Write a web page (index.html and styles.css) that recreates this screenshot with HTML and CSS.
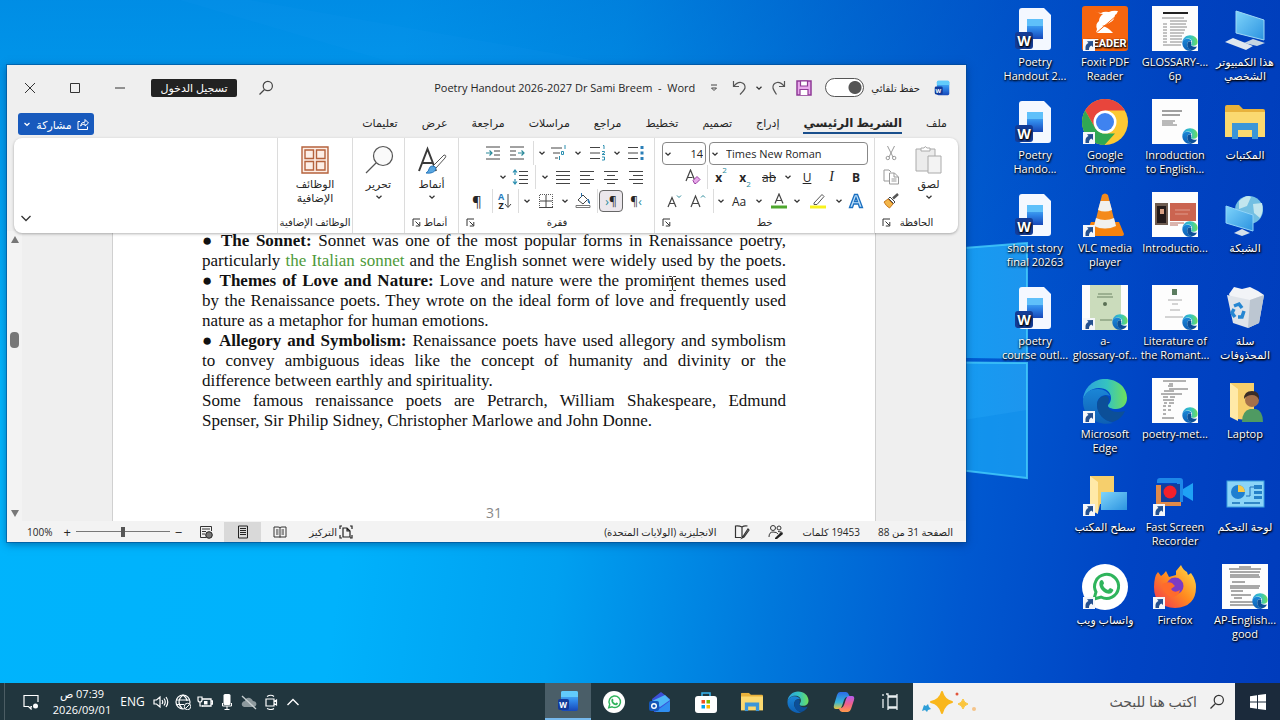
FILE: index.html
```
<!DOCTYPE html>
<html lang="ar" dir="rtl">
<head>
<meta charset="utf-8">
<title>Poetry Handout 2026-2027 Dr Sami Breem - Word</title>
<link rel="stylesheet" href="styles.css">
</head>
<body>
<svg class="defs" aria-hidden="true">
  <defs>
    <linearGradient id="gEdgeA" x1="0" y1="0" x2="1" y2="0"><stop offset="0" stop-color="#2b9fe0"/><stop offset=".55" stop-color="#35c3c0"/><stop offset="1" stop-color="#6fe05a"/></linearGradient>
    <linearGradient id="gEdgeB" x1="0" y1="0" x2="0" y2="1"><stop offset="0" stop-color="#1b86d6"/><stop offset="1" stop-color="#0d5fb4"/></linearGradient>
    <linearGradient id="gWord" x1="0" y1="0" x2="0" y2="1"><stop offset="0" stop-color="#5cc8fa"/><stop offset=".5" stop-color="#2f86e8"/><stop offset="1" stop-color="#1747b8"/></linearGradient>
    <linearGradient id="gFox" x1="1" y1="0" x2="0" y2="1"><stop offset="0" stop-color="#ffe14a"/><stop offset=".5" stop-color="#ff8a1f"/><stop offset="1" stop-color="#f02a5a"/></linearGradient>
    <linearGradient id="gScreen" x1="0" y1="0" x2="1" y2="1"><stop offset="0" stop-color="#7fd4fb"/><stop offset="1" stop-color="#2b93e0"/></linearGradient>
    <linearGradient id="gPane" x1="0" y1="0" x2="1" y2="0"><stop offset="0" stop-color="#0fa2f6"/><stop offset="1" stop-color="#1d95ee"/></linearGradient>
    <linearGradient id="gCopA" x1="0" y1="0" x2="0" y2="1"><stop offset="0" stop-color="#2a6be8"/><stop offset=".6" stop-color="#36b6d8"/><stop offset="1" stop-color="#e8c63a"/></linearGradient>
    <linearGradient id="gCopB" x1="0" y1="0" x2="0" y2="1"><stop offset="0" stop-color="#b45cf0"/><stop offset=".5" stop-color="#f0608c"/><stop offset="1" stop-color="#ff9a4a"/></linearGradient>
  </defs>
  <symbol id="chev" viewBox="0 0 8 8"><path d="M1.500 2.800 4 5.200 6.500 2.800" fill="none" stroke="#333" stroke-width="1.300"/></symbol>
  <symbol id="launch" viewBox="0 0 9 9"><path d="M1 8V1h7M3.500 3.500 7.500 7.500M7.800 4v4h-4" fill="none" stroke="#333" stroke-width="1"/></symbol>
  <symbol id="arrow" viewBox="0 0 12 12"><path d="M0 0h12v12H0z" fill="#f4f6fa"/><path d="M2.500 11V8.500q0-3.500 3-4.500L4 2.200 10 2v6L8.300 6.500Q5.800 7.500 6 11z" fill="#24508f"/></symbol>
  <symbol id="edge" viewBox="0 0 46 46">
    <path d="M1 22C2 9 12 1 23 1c13 0 22 9 22 19 0 7-5 11-11 11-5 0-8-2-8-3 0-2 3-3 3-8 0-6-5-10-12-10C9 10 3 15 1 22z" fill="url(#gEdgeA)"/>
    <path d="M1 22C3 14 9 11 16 11c6 0 10 3 12 7-6-3-13 1-13 9 0 9 8 16 16 18-17 4-31-8-30-23z" fill="url(#gEdgeB)"/>
    <path d="M15 27c0-5 4-10 10-9 3 2 2 5 1 8-1 5 4 8 10 8 4 0 6-1 7-1-2 5-7 10-13 11-8-1-15-8-15-17z" fill="#0c4f98"/>
  </symbol>
  <symbol id="folder" viewBox="0 0 40 34"><path d="M0 2q0-2 2-2h12l4 4h20q2 0 2 2v26H0z" fill="#e8b23c"/><path d="M0 7h40v25H0z" fill="#fbd970"/><path d="M7 34V18h26v16h-6v-9H13v9z" fill="#3c96d8"/></symbol>
  <symbol id="worddoc" viewBox="0 0 46 46">
    <path d="M10 2h22l7 7v32q0 3-3 3H10q-3 0-3-3V5q0-3 3-3z" fill="#f4f8ff"/><path d="M15 13h16v20H15z" fill="url(#gWord)"/><path d="M15 13h16v7H15z" fill="#5fc0fa"/>
    <rect x="3" y="26" width="18" height="17" rx="3" fill="#143c96"/><text x="12" y="40" text-anchor="middle" class="badge-letter">W</text>
  </symbol>
  <symbol id="wordapp" viewBox="0 0 22 22"><rect x="4" y="1" width="17" height="20" rx="2" fill="url(#gWord)"/><path d="M4 3q0-2 2-2h13q2 0 2 2v4H4z" fill="#62cbfb"/><rect x="1" y="9" width="11" height="11" rx="2" fill="#123a9a"/><text x="6" y="18" text-anchor="middle" class="app-letter">W</text></symbol>
  <symbol id="whats" viewBox="0 0 46 46"><circle cx="23" cy="23" r="23" fill="#fff"/><path d="M12 35l2-7a12 12 0 1 1 5 5z" fill="none" stroke="#2fb45c" stroke-width="3"/><path d="M18 17c2-2 3-1 4 2 0 1-1 2-1 2 1 3 3 4 5 5l2-2c3 1 4 2 3 3-2 4-6 3-9 1-3-2-6-7-4-11z" fill="#2fb45c"/></symbol>
  <symbol id="lens" viewBox="0 0 16 16"><circle cx="9.800" cy="6" r="4.600" fill="none" stroke="currentColor" stroke-width="1.200"/><path d="M6.500 9.500 1.500 14.500" stroke="currentColor" stroke-width="1.200"/></symbol>
</svg>

<main class="desktop">
  <svg class="wallpaper" viewBox="0 0 1280 683" preserveAspectRatio="none" aria-hidden="true">
    <path d="M180 0 400 65H620L250 0z" fill="#3bb0ff" opacity=".06"/>
    <path d="M900 253 1027 243V359L900 357z" fill="url(#gPane)"/>
    <path d="M900 362 1027 363V478L900 463z" fill="url(#gPane)"/>
    <path d="M900 430 1027 410V478L900 463z" fill="#0b8bea" opacity=".5"/>
    <path d="M900 253 1027 243V359M900 362 1027 363V478L900 463" fill="none" stroke="#45cdfb" stroke-width="2" opacity=".8"/>
  </svg>

  <nav class="shortcuts" aria-label="سطح المكتب">
    <a href="#"><svg viewBox="0 0 46 46"><path d="M14 5 42 14V34L14 27z" fill="url(#gScreen)" stroke="#9fd8f5"/><path d="M22 37l9-4 12 4-8 3z" fill="#c5d5e2"/><path d="M3 36l8-4 20 8-7 4z" fill="#dfe7ee"/></svg><span>هذا الكمبيوتر<br>الشخصي</span></a>
    <a href="#"><svg viewBox="0 0 46 46"><use href="#folder" x="3" y="6" width="40" height="34"/></svg><span>المكتبات</span></a>
    <a href="#"><svg viewBox="0 0 46 46"><circle cx="27" cy="18" r="14" fill="#72bfe2"/><path d="M17 9q8-7 12-4l-4 9-8 3zM31 12l9-1q2 8-2 15l-6-5z" fill="#c2e6ee"/><path d="M4 14 31 23V39L4 31z" fill="url(#gScreen)" stroke="#8fd3f8"/><path d="M12 41l8-4 8 4-8 3z" fill="#d5e0ea"/></svg><span>الشبكة</span></a>
    <a href="#"><svg viewBox="0 0 46 46"><path d="M7 9 12 2l8 2 8-2 8 4 6 4-4 6H9z" fill="#f2f4f7"/><path d="M5 10l23 5 14-5-5 28-11 5-15-5z" fill="#dfe4ea"/><path d="M28 15 42 10 37 38l-11 5z" fill="#bcc6d1"/><path d="M12 21l5-2 3 4M22 26l-2 6h-4M13 32l-3-4 2-4" fill="none" stroke="#2586d2" stroke-width="3.500"/></svg><span>سلة<br>المحذوفات</span></a>
    <a href="#"><svg viewBox="0 0 46 46"><path d="M8 5h24v38l-16-2-8-3z" fill="#f6cf6c"/><path d="M8 5l8 6v32l-8-4z" fill="#ffe9a8"/><path d="M20 44q0-11 8-13h6q7 2 7 13z" fill="#4f9a62"/><circle cx="30" cy="22" r="7" fill="#a5704a"/><path d="M22 21q0-8 8-8t7 9q-2-5-7-5t-8 4z" fill="#3a2c26"/></svg><span>Laptop</span></a>
    <a href="#"><svg viewBox="0 0 46 46"><rect x="5" y="10" width="37" height="26" fill="#8bd4f7" stroke="#3a9fe0"/><circle cx="16" cy="21" r="7" fill="#1f7fd0"/><path d="M16 21V14a7 7 0 0 1 7 7z" fill="#f7c948"/><path d="M24 25h4V16h5" fill="none" stroke="#2173bd"/><path d="M32 14h8v4h-8zM32 20h8v3h-8zM32 25h8v3h-8z" fill="#2480c8"/><path d="M10 32h8M22 32h16" stroke="#3287c7" stroke-width="2"/></svg><span>لوحة التحكم</span></a>
    <a href="#"><svg viewBox="0 0 46 46"><path d="M0 0h46v45H0z" fill="#fdfdfd"/><path d="M17 3h12M7 5h32M8 8h30M8 11h29M8 13h30M10 18h13M8 22h30M8 24h29M9 27h12M9 31h20M12 34h8M8 38h26M8 41h24" stroke="#555" stroke-width="1"/><use href="#edge" x="30" y="29" width="16" height="16"/></svg><span>AP-English...<br>good</span></a>

    <a href="#"><svg viewBox="0 0 46 46"><path d="M0 0h46v45H0z" fill="#fdfdfd"/><path d="M11 7h25" stroke="#222" stroke-width="2"/><path d="M10 12h22M18 15h17M11 18h4M18 18h16M11 21h4M18 21h17M11 24h4M18 24h15M11 27h4M18 27h14M11 30h4M18 30h12M11 33h4M18 33h12M11 36h4M18 36h12M11 39h18" stroke="#888" stroke-width="1"/><use href="#edge" x="30" y="29" width="16" height="16"/></svg><span>GLOSSARY-...<br>6p</span></a>
    <a href="#"><svg viewBox="0 0 46 46"><path d="M0 0h46v45H0z" fill="#fdfdfd"/><path d="M10 12h20M10 16h18" stroke="#444" stroke-width="1"/><path d="M10 22h13M10 24h11M10 26h15" stroke="#777" stroke-width="1"/><use href="#edge" x="30" y="29" width="16" height="16"/></svg><span>Inroduction<br>to English...</span></a>
    <a href="#"><svg viewBox="0 0 46 46"><path d="M0 0h46v45H0z" fill="#fdfdfd"/><path d="M3 11h13v22H3z" fill="#6e5c50"/><path d="M5 14h9v17H5z" fill="#241b1a"/><path d="M8 17h4v5H8z" fill="#d9a184"/><path d="M18 11h26v18H18z" fill="#cb6450"/><path d="M23 18h15M23 22h13" stroke="#e09a8b"/><path d="M18 31h14M18 33h8" stroke="#b76a5c"/><use href="#edge" x="30" y="29" width="16" height="16"/></svg><span>Introductio...</span></a>
    <a href="#"><svg viewBox="0 0 46 46"><path d="M0 0h46v45H0z" fill="#fdfdfd"/><path d="M20 4h5v6h-5z" fill="#5c7d60"/><path d="M16 15h14M20 19h6M18 25h10M13 32h18" stroke="#aaa"/><use href="#edge" x="30" y="29" width="16" height="16"/></svg><span>Literature of<br>the Romant...</span></a>
    <a href="#"><svg viewBox="0 0 46 46"><path d="M0 0h46v45H0z" fill="#fdfdfd"/><path d="M11 3h23M17 6h4M16 8h5M17 11h19M12 13h10M9 16h21M11 19h5M18 19h5M11 22h11M12 25h3M17 25h5M11 28h3M16 28h3M11 32h3M16 32h3M11 36h3M10 40h12" stroke="#666" stroke-width="1"/><use href="#edge" x="30" y="29" width="16" height="16"/></svg><span>poetry-met...</span></a>
    <a href="#"><svg viewBox="0 0 46 46"><path d="M5 10q0-3 3-3h20q3 0 3 3v21h-6V12H5z" fill="#1e88e8"/><path d="M31 18l10-6v18l-10-6z" fill="#1fa2f5"/><path d="M4 14h5v17h20v4H7q-3 0-3-3z" fill="#e08a4a"/><path d="M9 13h19v18H9z" fill="#123f9c"/><circle cx="18" cy="21" r="6.500" fill="#f3202a"/><use href="#arrow" x="1" y="33" width="12" height="12"/></svg><span>Fast Screen<br>Recorder</span></a>
    <a href="#"><svg viewBox="0 0 46 46"><path d="M3 14q1-4 3-6l3 4q3-2 5-5l3 6 7-2V7l5-6q2 5 6 7l1 3 3-2q5 7 5 14 0 20-21 21Q2 43 2 23q0-5 1-9z" fill="url(#gFox)"/><circle cx="23" cy="22" r="8.500" fill="#7c3bc4"/><path d="M10 20q6-3 10-1l3 3-4 3q3 5 9 1-1 7-9 7-8-3-9-13z" fill="#ff6b2c"/><use href="#arrow" x="1" y="33" width="12" height="12"/></svg><span>Firefox</span></a>

    <a href="#"><svg viewBox="0 0 46 46"><rect x="0" width="46" height="45" rx="3" fill="#f6650f"/><path d="M12 5q3 2 7 2 3-2 8-1 4-2 9-1-1 3-3 4 0 5-6 8-3 2-7 3 6 1 11 7H14l1-4q-2-5 2-8 0-4 4-7-3 0-9-3z" fill="#fff"/><path d="M13 28 34 10" stroke="#f6650f" stroke-width="1"/><text x="24" y="41" text-anchor="middle" class="foxit">READER</text><use href="#arrow" x="1" y="33" width="12" height="12"/></svg><span>Foxit PDF<br>Reader</span></a>
    <a href="#"><svg viewBox="0 0 46 46"><circle cx="23" cy="23" r="23" fill="#fcc934"/><path d="M3.100 11.500A23 23 0 0 1 42.900 11.500H23L13 28.700z" fill="#e8453c"/><path d="M3.100 11.500 13 28.700Q17 34.500 23 34.500h10L22.500 46A23 23 0 0 1 3.100 11.500z" fill="#30a853"/><circle cx="23" cy="23" r="11.500" fill="#fff"/><circle cx="23" cy="23" r="9" fill="#3f83f0"/><use href="#arrow" x="1" y="33" width="12" height="12"/></svg><span>Google<br>Chrome</span></a>
    <a href="#"><svg viewBox="0 0 46 46"><path d="M9 30h28l5 12q0 2-2 2H6q-2 0-2-2z" fill="#f5820d"/><path d="M20 3q3-3 6 0l8 32q-11 5-22 0z" fill="#f48a1c"/><path d="M18.500 9h9l2.500 9q-7 3-14 0zM14 26q9 4 18 0l2 8q-11 5-22 0z" fill="#f1f1ef"/><use href="#arrow" x="1" y="33" width="12" height="12"/></svg><span>VLC media<br>player</span></a>
    <a href="#"><svg viewBox="0 0 46 46"><path d="M0 0h46v45H0z" fill="#fdfdfd"/><path d="M8 0h31v45H8z" fill="#cbdcbc"/><path d="M16 9h14M15 12h16M18 35h12" stroke="#6d8464"/><circle cx="23" cy="19" r="2" fill="#5a7054"/><use href="#edge" x="30" y="29" width="16" height="16"/><use href="#arrow" x="1" y="33" width="12" height="12"/></svg><span>a-<br>glossary-of...</span></a>
    <a href="#"><svg viewBox="0 0 46 46"><use href="#edge" width="46" height="46"/><use href="#arrow" x="1" y="33" width="12" height="12"/></svg><span>Microsoft<br>Edge</span></a>
    <a href="#"><svg viewBox="0 0 46 46"><path d="M8 5h24v28H18l-2 9-8-4z" fill="#f6cf6c"/><path d="M8 5l8 6v32l-8-4z" fill="#ffe9a8"/><path d="M19 21h26v18H19z" fill="url(#gScreen)"/><use href="#arrow" x="1" y="33" width="12" height="12"/></svg><span>سطح المكتب</span></a>
    <a href="#"><svg viewBox="0 0 46 46"><use href="#whats" width="46" height="46"/><use href="#arrow" x="1" y="33" width="12" height="12"/></svg><span>واتساب ويب</span></a>

    <a href="#"><svg viewBox="0 0 46 46"><use href="#worddoc"/></svg><span>Poetry<br>Handout 2...</span></a>
    <a href="#"><svg viewBox="0 0 46 46"><use href="#worddoc"/></svg><span>Poetry<br>Hando...</span></a>
    <a href="#"><svg viewBox="0 0 46 46"><use href="#worddoc"/></svg><span>short story<br>final 20263</span></a>
    <a href="#"><svg viewBox="0 0 46 46"><use href="#worddoc"/></svg><span>poetry<br>course outl...</span></a>
  </nav>

  <section class="window" aria-label="Word">
    <header class="titlebar">
      <svg class="i16" viewBox="0 0 22 22"><use href="#wordapp"/></svg>
      <label class="autosave"><span>حفظ تلقائي</span><input type="checkbox"></label>
      <div class="quick">
        <button aria-label="حفظ"><svg class="i16" viewBox="0 0 16 16"><path d="M1 1h14v14H1z" fill="#e9a8ec" stroke="#8f3a96" stroke-width="1.500"/><path d="M4.500 1h7v5h-7zM4 15V9.500h8V15" fill="#fff" stroke="#8f3a96" stroke-width="1.200"/></svg></button>
        <button aria-label="إعادة"><svg class="i16" viewBox="0 0 16 16"><path d="M14.500 1v5.500H9M14 6.200Q11 2 7 2.500 2.500 3.500 3 8q.5 2 3.500 6.500" fill="none" stroke="#555" stroke-width="1.200"/></svg></button>
        <button class="slim" aria-label="خيارات التراجع"><svg class="i8"><use href="#chev"/></svg></button>
        <button aria-label="تراجع"><svg class="i16" viewBox="0 0 16 16"><path d="M1.500 1v5.500H7M2 6.200Q5 2 9 2.500q4.500 1 4 5.500-.5 2-5 6.500" fill="none" stroke="#555" stroke-width="1.200"/></svg></button>
        <button aria-label="تخصيص"><svg class="i8" viewBox="0 0 8 8"><path d="M1 1h6M1.500 4 4 6.500 6.500 4z" fill="none" stroke="#444"/></svg></button>
      </div>
      <h1 dir="ltr">Poetry Handout 2026-2027 Dr Sami Breem&nbsp; -&nbsp; Word</h1>
      <button class="find" aria-label="بحث"><svg class="i16"><use href="#lens"/></svg></button>
      <button class="signin">تسجيل الدخول</button>
      <div class="caption">
        <button aria-label="تصغير"><svg class="i10" viewBox="0 0 10 10"><path d="M0 5h10" stroke="#333"/></svg></button>
        <button aria-label="تكبير"><svg class="i10" viewBox="0 0 10 10"><path d="M.5.5h9v9h-9z" fill="none" stroke="#333"/></svg></button>
        <button aria-label="إغلاق"><svg class="i10" viewBox="0 0 10 10"><path d="M0 0 10 10M10 0 0 10" stroke="#333"/></svg></button>
      </div>
    </header>

    <nav class="tabs">
      <a href="#">ملف</a><a href="#" class="on">الشريط الرئيسي</a><a href="#">إدراج</a><a href="#">تصميم</a><a href="#">تخطيط</a><a href="#">مراجع</a><a href="#">مراسلات</a><a href="#">مراجعة</a><a href="#">عرض</a><a href="#">تعليمات</a>
      <button class="share"><svg class="i12" viewBox="0 0 12 12"><path d="M3 3.500H1v8h9.500V8.500M3.500 8Q4 4 8 4V1.500L11.500 5 8 8V6Q5 6 3.500 8z" fill="none" stroke="#fff"/></svg><span>مشاركة</span><svg class="i8" viewBox="0 0 8 8"><path d="M1.500 3 4 5.300 6.500 3" fill="none" stroke="#fff" stroke-width="1.300"/></svg></button>
    </nav>

    <div class="ribbon">
      <section class="group clipboard">
        <div class="body split">
          <button class="big"><svg class="i30" viewBox="0 0 30 30"><path d="M2 4h19v22H2z" fill="#ececec" stroke="#aaa"/><path d="M7 6V3h3q1-3 3 0h3v3z" fill="#fff" stroke="#aaa"/><path d="M14 11h13v17H14z" fill="#f3f3f3" stroke="#aaa"/></svg><span>لصق</span><svg class="i8"><use href="#chev"/></svg></button>
          <div class="stack">
            <button aria-label="قص"><svg class="i16" viewBox="0 0 16 16"><path d="M4.500 1 10 12M11.500 1 6 12" stroke="#999"/><circle cx="4.800" cy="13" r="1.700" fill="none" stroke="#999"/><circle cx="11.200" cy="13" r="1.700" fill="none" stroke="#999"/></svg></button>
            <button aria-label="نسخ"><svg class="i16" viewBox="0 0 16 16"><path d="M6 12H1V1h5l2 2M6.500 4h5l4 4v7h-9zM11 4v4h4M8.500 10h5M8.500 12h5" fill="none" stroke="#999"/></svg></button>
            <button aria-label="نسخ التنسيق"><svg class="i16" viewBox="0 0 16 16"><path d="M15 1l-5 4.500" stroke="#555" stroke-width="2.500"/><path d="M7 4l5 5-1.500 1.500-5-5z" fill="#fff" stroke="#444"/><path d="M5 6l5 5-3.500 4Q3 13 1 9z" fill="#f3b64a" stroke="#c7761c"/></svg></button>
          </div>
        </div>
        <footer><span>الحافظة</span><svg class="i9"><use href="#launch"/></svg></footer>
      </section>

      <section class="group font">
        <div class="body">
          <div class="pickers">
            <label class="picker family"><select aria-label="الخط" dir="ltr"><option>Times New Roman</option></select><svg class="i8"><use href="#chev"/></svg></label>
            <label class="picker size"><select aria-label="حجم الخط" dir="ltr"><option>14</option></select><svg class="i8"><use href="#chev"/></svg></label>
          </div>
          <div class="tools f2">
            <button><b>B</b></button><button><i class="serif">I</i></button><button><u>U</u></button><button><svg class="i8"><use href="#chev"/></svg></button><button><s>ab</s></button><button dir="ltr"><b>x</b><sub>2</sub></button><button dir="ltr"><b>x</b><sup>2</sup></button><i class="sep"></i><button aria-label="مسح التنسيق"><svg class="i16" viewBox="0 0 16 16"><path d="M1 12 5.500 1 10 12M2.500 8.500h5" fill="none" stroke="#444" stroke-width="1.200"/><path d="M8 11.500 12 7.500l3 3-4 4H9.500z" fill="#e7a9ea" stroke="#9b3fa2"/></svg></button>
          </div>
          <div class="tools f3">
            <button aria-label="تأثيرات"><svg class="i16" viewBox="0 0 16 16"><path d="M1.500 14.500 6.500 1.500h3l5 13h-3l-1.200-3.500H5.700L4.500 14.500zM6.500 8.500h3L8 4.500z" fill="#bfe0fa" stroke="#1a6fc0" stroke-width="1.300"/></svg></button>
            <button><svg class="i8"><use href="#chev"/></svg></button>
            <button aria-label="تمييز"><svg class="i16" viewBox="0 0 16 16"><path d="M4 10 12 1.500l2 2L7 11.500H4z" fill="#fff" stroke="#555"/><path d="M0 12.500h16v3H0z" fill="#f8f21e"/></svg></button>
            <button><svg class="i8"><use href="#chev"/></svg></button>
            <button aria-label="لون الخط"><svg class="i16" viewBox="0 0 16 16"><path d="M4 10.500 8 1l4 9.500M5.500 7.500h5" fill="none" stroke="#444" stroke-width="1.200"/><path d="M0 12.500h16v3H0z" fill="#4ea72e"/></svg></button>
            <button><svg class="i8"><use href="#chev"/></svg></button>
            <button>Aa</button>
            <button><svg class="i8"><use href="#chev"/></svg></button>
            <i class="sep"></i>
            <button aria-label="تكبير الخط"><svg class="i16" viewBox="0 0 16 16"><path d="M1 14 5.500 3 10 14M2.500 10.500h6" fill="none" stroke="#444" stroke-width="1.200"/><path d="M11 4.500 13 2.500l2 2" fill="none" stroke="#2a8a9a"/></svg></button>
            <button aria-label="تصغير الخط"><svg class="i16" viewBox="0 0 16 16"><path d="M2 14 6 4.500 10 14M3.500 10.500h5" fill="none" stroke="#444" stroke-width="1.200"/><path d="M11 2.500 13 4.500l2-2" fill="none" stroke="#2a8a9a"/></svg></button>
          </div>
        </div>
        <footer><span>خط</span><svg class="i9"><use href="#launch"/></svg></footer>
      </section>

      <section class="group para">
        <div class="body">
          <div class="tools p1">
            <button aria-label="تعداد نقطي"><svg class="i16" viewBox="0 0 16 16"><path d="M0 2.500h10M0 8h10M0 13.500h10" stroke="#444"/><path d="M12.500 1h3v3h-3zM12.500 6.500h3v3h-3zM12.500 12h3v3h-3z" fill="#2a7fb8"/></svg></button>
            <button><svg class="i8"><use href="#chev"/></svg></button>
            <button aria-label="ترقيم"><svg class="i16" viewBox="0 0 16 16"><path d="M0 2.500h10M0 8h10M0 13.500h10" stroke="#444"/><path d="M13 .5h1v3.500M12 6.500h2.500v1.200L12 9.500h3M12 12h2.500v3H12" fill="none" stroke="#2a8fb0"/></svg></button>
            <button><svg class="i8"><use href="#chev"/></svg></button>
            <button aria-label="قائمة متعددة"><svg class="i16" viewBox="0 0 16 16"><path d="M0 3h11M2 8h7M4 13h3" stroke="#444"/><path d="M14 0v4M10.500 6.500h2v3h-2zM8.500 11v4" fill="none" stroke="#2a8fb0"/></svg></button>
            <button><svg class="i8"><use href="#chev"/></svg></button>
            <i class="sep"></i>
            <button aria-label="إنقاص المسافة"><svg class="i16" viewBox="0 0 16 16"><path d="M1 2h14M1 6h6M1 10h6M1 14h14" stroke="#444"/><path d="M9 8h6M12.500 5.500 15 8l-2.500 2.500" fill="none" stroke="#2a8a9a" stroke-width="1.200"/></svg></button>
            <button aria-label="زيادة المسافة"><svg class="i16" viewBox="0 0 16 16"><path d="M1 2h14M9 6h6M9 10h6M1 14h14" stroke="#444"/><path d="M1 8h6M4.500 5.500 7 8l-2.500 2.500" fill="none" stroke="#2a8a9a" stroke-width="1.200"/></svg></button>
          </div>
          <div class="tools p2">
            <button aria-label="محاذاة لليمين"><svg class="i16" viewBox="0 0 16 16"><path d="M1 2.500h14M5 6.500h10M1 10.500h14M5 14.500h10" stroke="#444"/></svg></button>
            <button aria-label="توسيط"><svg class="i16" viewBox="0 0 16 16"><path d="M1 2.500h14M4 6.500h8M1 10.500h14M4 14.500h8" stroke="#444"/></svg></button>
            <button aria-label="محاذاة لليسار"><svg class="i16" viewBox="0 0 16 16"><path d="M1 2.500h14M1 6.500h10M1 10.500h14M1 14.500h10" stroke="#444"/></svg></button>
            <button aria-label="ضبط"><svg class="i16" viewBox="0 0 16 16"><path d="M1 2.500h14M1 6.500h14M1 10.500h14M1 14.500h14" stroke="#444"/></svg></button>
            <button><svg class="i8"><use href="#chev"/></svg></button>
            <i class="sep"></i>
            <button aria-label="تباعد الأسطر"><svg class="i16" viewBox="0 0 16 16"><path d="M7 2.500h9M7 6.500h9M7 10.500h9M7 14.500h9" stroke="#444"/><path d="M3 1v5M3 10v5M1 3.500 3 1l2 2.500M1 12.500 3 15l2-2.500" fill="none" stroke="#2a8fb0" stroke-width="1.200"/></svg></button>
            <button><svg class="i8"><use href="#chev"/></svg></button>
          </div>
          <div class="tools p3">
            <button aria-label="من اليسار" dir="ltr">¶<span class="teal">‹</span></button>
            <button class="pressed" aria-label="من اليمين" dir="ltr"><span class="teal">›</span>¶</button>
            <i class="sep"></i>
            <button aria-label="تظليل"><svg class="i16" viewBox="0 0 16 16"><path d="M3 7 8 2l4.500 4.500L8 11z" fill="#fff" stroke="#444"/><path d="M6.500 4V0M13 6q2 3 1.500 4.500Q13 10 13 6z" stroke="#2a6fa8" fill="#2a6fa8"/><path d="M1 12.500h14v2H1z" fill="#fff" stroke="#777"/></svg></button>
            <button><svg class="i8"><use href="#chev"/></svg></button>
            <button aria-label="حدود"><svg class="i16" viewBox="0 0 16 16"><path d="M1.500 15V1.500h13V15" fill="none" stroke="#555" stroke-dasharray="1 1"/><path d="M8 2v12M2 8h12M1 14.500h14" stroke="#444"/></svg></button>
            <button><svg class="i8"><use href="#chev"/></svg></button>
            <i class="sep"></i>
            <button aria-label="فرز" dir="ltr"><span class="az"><span class="blue">A</span><span>Z</span></span><svg class="down" viewBox="0 0 8 16"><path d="M4 1v13M1 11l3 3.500L7 11" fill="none" stroke="#444"/></svg></button>
            <i class="sep"></i>
            <button aria-label="إظهار الكل"><span class="pil">¶</span></button>
          </div>
        </div>
        <footer><span>فقرة</span><svg class="i9"><use href="#launch"/></svg></footer>
      </section>

      <section class="group styles">
        <div class="body"><button class="big"><svg class="i30" viewBox="0 0 30 30"><path d="M2 26 10.500 4 19 26M5 18h11" fill="none" stroke="#3a3a3a" stroke-width="2"/><path d="M27 10q3 0 1 3l-9 10-3-2z" fill="#fff" stroke="#555"/><path d="M15 21q4 0 4 3-2 5-10 4 3-2 3-4 1-3 3-3z" fill="#58a6e0" stroke="#2a78bd"/></svg><span>أنماط</span><svg class="i8"><use href="#chev"/></svg></button></div>
        <footer><span>أنماط</span><svg class="i9"><use href="#launch"/></svg></footer>
      </section>
      <section class="group editing">
        <div class="body"><button class="big"><svg class="i30" viewBox="0 0 30 30"><circle cx="19" cy="11" r="9.500" fill="#fafafa" stroke="#555" stroke-width="1.200"/><path d="M12 18 2 28" stroke="#555" stroke-width="1.300"/></svg><span>تحرير</span><svg class="i8"><use href="#chev"/></svg></button></div>
      </section>
      <section class="group addins">
        <div class="body"><button class="big"><svg class="i30" viewBox="0 0 30 30"><path d="M2 2h26v26H2zM5 5h8.500v8.500H5zM16.500 5H25v8.500h-8.500zM5 16.500h8.500V25H5zM16.500 16.500H25V25h-8.500z" fill="#fdeee6" stroke="#b5623c" stroke-width="1.400"/></svg><span>الوظائف<br>الإضافية</span></button></div>
        <footer><span>الوظائف الإضافية</span></footer>
      </section>
      <button class="collapse" aria-label="طي الشريط"><svg class="i10" viewBox="0 0 10 10"><path d="M.5 3 5 7.500 9.500 3" fill="none" stroke="#333" stroke-width="1.300"/></svg></button>
    </div>

    <div class="workspace" dir="ltr">
      <div class="scroll"><svg class="i10" viewBox="0 0 10 10"><path d="M5 1l4 7H1z" fill="#777"/></svg><i></i><svg class="i10" viewBox="0 0 10 10"><path d="M5 9l4-7H1z" fill="#777"/></svg></div>
      <article class="page" lang="en">
        <p><span class="full"><b>● The Sonnet:</b> Sonnet was one of the most popular forms in Renaissance poetry,</span>
        <span class="full">particularly <span class="green">the Italian sonnet</span> and the English sonnet were widely used by the poets.</span></p>
        <p><span class="full"><b>● Themes of Love and Nature:</b> Love and nature were the prominent themes used</span>
        <span class="full">by the Renaissance poets. They wrote on the ideal form of love and frequently used</span>
        nature as a metaphor for human emotions.</p>
        <p><span class="full"><b>● Allegory and Symbolism:</b> Renaissance poets have used allegory and symbolism</span>
        <span class="full">to convey ambiguous ideas like the concept of humanity and divinity or the</span>
        difference between earthly and spirituality.</p>
        <p><span class="full">Some famous renaissance poets are Petrarch, William Shakespeare, Edmund</span>
        Spenser, Sir Philip Sidney, Christopher Marlowe and John Donne.</p>
        <div class="folio">31</div>
      </article>
    </div>

    <footer class="status">
      <span>الصفحة 31 من 88</span>
      <span>19453 كلمات</span>
      <svg class="i16" viewBox="0 0 16 16"><circle cx="5" cy="4" r="2.500" fill="none" stroke="#333"/><circle cx="11" cy="4" r="2" fill="none" stroke="#333"/><path d="M1 13q0-5 4-5t5 2M10 7.500q4 0 5 2" fill="none" stroke="#333"/><path d="M7 14l6-6 2 2-6 5H7z" fill="#222"/></svg>
      <svg class="i16" viewBox="0 0 16 16"><path d="M8 14V3q-3-1.500-6.500-1v11.500H7M8 3q2-1.500 5.500-1M8 14l6-9 1 1-5 7z" fill="none" stroke="#333" stroke-width="1.200"/></svg>
      <span>الانجليزية (الولايات المتحدة)</span>
      <div class="viewbar">
        <button class="focus"><svg class="i14" viewBox="0 0 14 14"><path d="M1 4V1h2M11 1h2v3M1 10v3h2M11 13h2v-3M4 3h4l3 3v6H4zM8 3v3h3" fill="none" stroke="#222" stroke-width="1.200"/></svg><span>التركيز</span></button>
        <div class="views">
          <button aria-label="قراءة"><svg class="i14" viewBox="0 0 14 14"><path d="M7 2.500v10M1 2h4q2 0 2 1 0-1 2-1h4v10H1zM3 5h2.500M3 7h2.500M3 9h2.500M8.500 5H11M8.500 7H11M8.500 9H11" fill="none" stroke="#333"/></svg></button>
          <button class="on" aria-label="تخطيط الطباعة"><svg class="i14" viewBox="0 0 14 14"><path d="M2.500 1h9v12h-9zM4 3.500h6M4 5.500h6M4 7.500h6M4 9.500h6" fill="none" stroke="#222"/></svg></button>
          <button aria-label="تخطيط الويب"><svg class="i14" viewBox="0 0 14 14"><path d="M7 12.500H1.500v-11h11V6M3 4h8M3 6.500h4M3 9h3" fill="none" stroke="#333"/><circle cx="10" cy="10" r="3.300" fill="#777" stroke="#222"/></svg></button>
        </div>
        <div class="zoom"><span>−</span><input type="range" min="10" max="190" value="100" aria-label="تكبير/تصغير"><span>+</span></div>
        <span>100%</span>
      </div>
    </footer>
  </section>
  <svg class="ibeam" viewBox="0 0 7 15" aria-hidden="true"><path d="M0 .5h2.500l1 1 1-1H7M3.500 1.500v12M0 14.500h2.500l1-1 1 1H7" fill="none" stroke="#333"/></svg>
</main>

<footer class="taskbar">
  <button class="start" aria-label="ابدأ"><svg class="i16" viewBox="0 0 16 16"><path d="M0 2.200 7 1.200V7.500H0zM8 1 16 0V7.500H8zM0 8.500h7v6.300L0 13.800zM8 8.500h8V16L8 15z" fill="#fff"/></svg></button>
  <label class="search"><svg class="i16"><use href="#lens"/></svg><input type="text" placeholder="اكتب هنا للبحث" aria-label="اكتب هنا للبحث">
    <svg class="sparkle" viewBox="0 0 56 26"><path d="M21 3q2 8 10 10-8 2-10 11-2-9-11-11 9-2 11-10z" fill="#f9b71d" stroke="#f9b71d" stroke-width="2" stroke-linejoin="round"/><path d="M42 10q1 4 5 5-4 1-5 5-1-4-5-5 4-1 5-5z" fill="#fbc53c" stroke="#fbc53c"/><path d="M3 16l2 1 2-2 1 3 2 2-3 1-1 2-2-2-3 1 1-3z" fill="#2f9fd8"/><circle cx="36" cy="5" r="1.500" fill="#e2563c"/><circle cx="53" cy="20" r="2" fill="#f5c48a"/></svg></label>
  <nav class="apps">
    <button aria-label="عرض المهام"><svg class="i20" viewBox="0 0 20 20"><path d="M8 5h9v10H8zM6 2h2v2M17 2v2h-9M8 18v-2h9v2M3 2v2M3 7v9" fill="none" stroke="#e8eef0" stroke-width="1.300"/></svg></button>
    <button aria-label="Copilot"><svg class="i22" viewBox="0 0 22 22"><path d="M7 1h6q2 0 3 3l1 2h-3q-2 0-3 3l-2 6q-1 3-3 3H3q-3 0-2-4L4 4q1-3 3-3z" fill="url(#gCopA)"/><path d="M15 21H9q-2 0-3-3l-1-1h3q2 0 3-3l2-6q1-3 3-3h3q3 0 2 4l-3 9q-1 3-3 3z" fill="url(#gCopB)"/></svg></button>
    <button aria-label="Edge"><svg class="i22" viewBox="0 0 46 46"><use href="#edge"/></svg></button>
    <button aria-label="مستكشف الملفات"><svg class="i22" viewBox="0 0 40 34"><use href="#folder"/></svg></button>
    <button aria-label="المتجر"><svg class="i22" viewBox="0 0 22 22"><path d="M7 5V2h8v3" fill="none" stroke="#39b5f0" stroke-width="1.500"/><rect y="5" width="22" height="17" rx="3" fill="#fff"/><path d="M6.500 9H10v3.500H6.500z" fill="#f25022"/><path d="M11.500 9H15v3.500h-3.500z" fill="#7fba00"/><path d="M6.500 14H10v3.500H6.500z" fill="#00a4ef"/><path d="M11.500 14H15v3.500h-3.500z" fill="#ffb900"/></svg></button>
    <button aria-label="Outlook"><svg class="i22" viewBox="0 0 22 22"><path d="M3 8 12 1l9 7v11q0 2-2 2H5z" fill="#3b50d8"/><path d="M3 10 16 4l5 5-10 7z" fill="#4db7f6"/><path d="M6 21 21 10v9q0 2-2 2z" fill="#2f8ff0"/><rect y="10" width="10" height="10" rx="2" fill="#1456b8"/><circle cx="5" cy="15" r="2.300" fill="none" stroke="#fff" stroke-width="1.400"/></svg></button>
    <button aria-label="WhatsApp"><svg class="i22" viewBox="0 0 46 46"><use href="#whats"/></svg></button>
    <button class="on" aria-label="Word"><svg class="i22" viewBox="0 0 22 22"><use href="#wordapp"/></svg></button>
  </nav>
  <div class="tray">
    <button aria-label="إظهار الرموز"><svg class="i14" viewBox="0 0 14 14"><path d="M1.500 10 7 4.500 12.500 10" fill="none" stroke="#fff" stroke-width="1.400"/></svg></button>
    <button aria-label="كاميرا"><svg class="i16" viewBox="0 0 16 16"><path d="M3 5h8v7H3zM11 7.500 13.500 6v5L11 9.500M4 2.500q4-2.500 7 0M4 14.500q4 2 7 0" fill="none" stroke="#fff" stroke-width="1.200"/></svg></button>
    <button aria-label="OneDrive"><svg class="i16" viewBox="0 0 16 16"><path d="M3 13q-3-1-2-4 1-2 3-2 1-4 5-3 2 1 3 3 3 0 3.500 3-.5 3-3 3z" fill="#8d999d"/><path d="M1 2 15 15" stroke="#c9d0d2" stroke-width="1.300"/></svg></button>
    <button aria-label="ميكروفون"><svg class="i16" viewBox="0 0 16 16"><rect x="4.500" y="0" width="7" height="11" rx="1.500" fill="#fff"/><path d="M3.500 9v3h9V9M8 12v3M5.500 15.500h5" fill="none" stroke="#fff"/></svg></button>
    <button aria-label="البطارية"><svg class="i16" viewBox="0 0 16 16"><path d="M5 5h9v7H5M14 7h1.500v3H14" fill="none" stroke="#fff" stroke-width="1.300"/><path d="M7 7h3.500v3.500H7z" fill="#fff"/><path d="M1 3v3q0 2 2 2t2-2V3zM3 8v4h3" fill="none" stroke="#fff" stroke-width="1.200"/></svg></button>
    <button aria-label="الشبكة"><svg class="i16" viewBox="0 0 16 16"><circle cx="8" cy="8" r="7" fill="none" stroke="#fff" stroke-width="1.200"/><path d="M1 6h14M1 10.500h8M8 1Q4 4 4 8t3.500 7M8 1q4 3 4 6" fill="none" stroke="#fff" stroke-width="1.200"/><circle cx="12.500" cy="12.500" r="3.200" fill="#21383f" stroke="#fff"/><path d="M10.500 14.500 14.500 10.500" stroke="#fff"/></svg></button>
    <button aria-label="الصوت"><svg class="i16" viewBox="0 0 16 16"><path d="M1 6h2.500L7 3v10L3.500 10H1zM9 6q1.500 2 0 4M11 4.500q2.500 3.500 0 7M13 3q3.500 5 0 10" fill="none" stroke="#fff" stroke-width="1.200"/></svg></button>
    <span class="lang">ENG</span>
    <time class="clock"><span>07:39 ص</span><span>2026/09/01</span></time>
    <button class="notify" aria-label="الإشعارات"><svg class="i16" viewBox="0 0 16 16"><path d="M15 8V1.500H1v11h4.500L8 15v-2.500h1" fill="none" stroke="#fff" stroke-width="1.200"/><circle cx="12.500" cy="12" r="2.500" fill="#fff"/></svg></button>
  </div>
</footer>
</body>
</html>
```
FILE: styles.css
```
* { box-sizing: border-box; }
html { height: 100%; }
body {
  margin: 0;
  min-height: 100%;
  display: flex;
  flex-direction: column;
  font-family: "Open Sans", "DejaVu Sans", sans-serif;
  font-size: 11px;
  color: #262626;
}
button, input, select { font: inherit; color: inherit; }
button {
  display: flex;
  align-items: center;
  justify-content: center;
  border: 0;
  padding: 0;
  background: none;
  white-space: nowrap;
}
a { color: inherit; text-decoration: none; }
svg { flex: none; display: block; }
.defs { position: absolute; width: 0; height: 0; }
.i8 { width: 8px; height: 8px; }
.i9 { width: 9px; height: 9px; }
.i10 { width: 10px; height: 10px; }
.i12 { width: 12px; height: 12px; }
.i14 { width: 14px; height: 14px; }
.i16 { width: 16px; height: 16px; }
.i20 { width: 20px; height: 20px; }
.i22 { width: 22px; height: 22px; }
.i30 { width: 30px; height: 30px; }
.badge-letter { font: bold 14px "Open Sans", sans-serif; fill: #fff; }
.app-letter { font: bold 8px "Open Sans", sans-serif; fill: #fff; }
.foxit { font: bold 11px "Roboto", sans-serif; fill: #fff; }

/* desktop */
.desktop {
  position: relative;
  flex: 1;
  background:
    linear-gradient(180deg, rgba(0, 60, 180, .32), rgba(0, 60, 180, 0) 55%),
    linear-gradient(97deg, #00b4fc 0%, #00b2fc 30%, #00a0f0 46%, #0078dc 62%, #0058d0 76%, #0044c4 88%, #003cbc 100%);
}
.wallpaper { position: absolute; inset: 0; width: 100%; height: 100%; }
.shortcuts {
  position: relative;
  display: grid;
  grid-auto-flow: column;
  grid-template-rows: repeat(7, 93px);
  grid-auto-columns: 70px;
  justify-content: start;
  padding-top: 6px;
}
.shortcuts a {
  display: flex;
  flex-direction: column;
  align-items: center;
  gap: 3px;
  color: #fff;
  line-height: 14px;
  text-align: center;
  white-space: nowrap;
  text-shadow: 0 1px 2px #000, 1px 1px 2px #000;
}
.shortcuts span { unicode-bidi: plaintext; }
.shortcuts svg { width: 46px; height: 46px; }

/* window */
.window {
  position: absolute;
  inset: 65px 314px 141px 7px;
  display: flex;
  flex-direction: column;
  background: #efefef;
  box-shadow: 0 0 0 1px rgba(0, 70, 140, .5), 0 2px 8px rgba(0, 30, 80, .5);
}
.titlebar {
  display: flex;
  align-items: center;
  height: 45px;
  padding-right: 16px;
}
.autosave { display: flex; align-items: center; gap: 7px; margin-right: 14px; font-size: 10px; white-space: nowrap; }
.autosave input {
  appearance: none;
  margin: 0;
  width: 39px;
  height: 19px;
  border: 1px solid #555;
  border-radius: 10px;
  background: radial-gradient(circle at 29px 50%, #555 6px, #fff 7px);
}
.quick { display: flex; align-items: center; margin-right: 8px; }
.quick button { width: 26px; height: 24px; }
.quick .slim { width: 12px; }
.titlebar h1 { margin: 0 6px 0 0; font-size: 11px; font-weight: 400; white-space: nowrap; }
.find { width: 24px; height: 24px; margin-left: 17px; margin-right: auto; color: #444; }
.signin { width: 86px; height: 18px; background: #222; color: #fff; border-radius: 2px; }
.caption { display: flex; margin-right: 9px; }
.caption button { width: 45px; height: 30px; }

.tabs { display: flex; align-items: center; gap: 24px; height: 28px; padding: 0 19px 0 11px; white-space: nowrap; }
.tabs a { line-height: 18px; border-bottom: 2px solid transparent; }
.tabs .on { font-weight: 700; font-size: 12px; border-color: #1a4f8c; }
.share { gap: 5px; margin-right: auto; width: 76px; height: 22px; background: #185abd; color: #fff; border-radius: 3px; }

.ribbon {
  position: relative;
  z-index: 1;
  display: flex;
  height: 95px;
  margin: 0 8px 0 7px;
  background: #fff;
  border-radius: 8px;
  box-shadow: 0 1px 3px rgba(0, 0, 0, .3);
}
.group { display: flex; flex-direction: column; padding: 3px 0 0; }
.group + .group { border-right: 1px solid #dcdcdc; }
.clipboard { width: 83px; }
.font { width: 220px; padding-right: 6px; }
.para { width: 196px; padding-right: 5px; }
.styles { width: 54px; }
.editing { width: 52px; }
.addins { width: 76px; border-left: 1px solid #dcdcdc; }
.body { height: 73px; }
.split { display: flex; }
.big { flex-direction: column; justify-content: flex-start; gap: 2px; width: 100%; padding-top: 4px; line-height: 14px; }
.split .big { width: 60px; }
.stack { flex: 1; display: grid; grid-template-rows: repeat(3, 24px); margin-left: 8px; justify-items: center; }
.group footer { display: grid; grid-template-columns: 16px 1fr 16px; align-items: center; height: 16px; white-space: nowrap; font-size: 10px; }
.group footer span { grid-column: 2; justify-self: center; }
.group footer svg { grid-column: 3; }
.styles footer { grid-template-columns: 8px 1fr 16px; }
.group.addins footer { grid-template-columns: 1fr; }
.group.addins footer span { grid-column: 1; }
.font footer, .para footer { margin-right: -6px; }
.pickers { display: flex; gap: 3px; height: 24px; padding-top: 1px; }
.picker { display: flex; align-items: center; height: 23px; border: 1px solid #888; border-radius: 4px; padding-left: 1px; }
.family { width: 159px; }
.size { width: 44px; }
.picker select { appearance: none; flex: 1; min-width: 0; border: 0; background: none; padding: 0 7px; outline: 0; }
.size select { padding: 0 2px; text-align-last: right; }
.tools { display: grid; height: 24px; align-items: center; justify-items: center; font-size: 12px; }
.tools button { width: 100%; height: 22px; }
.f2 { grid-template-columns: 24px 25px 24px 14px 24px 24px 24px 4px 24px; }
.f3 { grid-template-columns: 24px 10px 32px 10px 26px 14px 26px 10px 6px 24px 24px; }
.p1 { grid-template-columns: 26px 12px 26px 14px 24px 10px 8px 24px 24px; }
.p2 { grid-template-columns: 26px 24px 24px 24px 12px 8px 22px 12px; }
.p3 { grid-template-columns: 26px 24px 4px 24px 12px 26px 12px 6px 20px 6px 24px; }
.sep { width: 1px; height: 24px; background: #dcdcdc; }
.serif { font-family: "Liberation Serif", serif; font-size: 14px; }
.tools sub, .tools sup { font-size: 8px; line-height: 8px; color: #2a8a9a; }
.tools sub { align-self: flex-end; }
.tools sup { align-self: flex-start; }
.tools .pressed { background: #ebe7ec; border: 1px solid #666; border-radius: 4px; }
.teal { color: #2a8a9a; }
.az { display: grid; font-size: 9px; line-height: 9px; font-weight: 700; }
.blue { color: #2a7fc0; }
.down { width: 8px; height: 16px; }
.pil { font-size: 15px; }
.collapse { margin: auto auto 10px 7px; width: 10px; height: 10px; }

/* document */
.workspace { flex: 1; min-height: 0; display: flex; margin-top: -2px; overflow: hidden; }
.scroll { width: 15px; display: flex; flex-direction: column; align-items: center; justify-content: space-between; padding: 4px 0 3px; background: #f3f3f3; }
.scroll i { width: 9px; height: 16px; margin-bottom: 74px; border-radius: 4px; background: #777; }
.page {
  flex: 1;
  display: flex;
  flex-direction: column;
  margin: 0 90px;
  padding: 0 89px;
  border: solid #d0d0d0;
  border-width: 0 1px;
  background: #fff;
  color: #111;
  font: 17px/20px "Liberation Serif", serif;
}
.page p { margin: 0; }
.full { display: block; text-align: justify; text-align-last: justify; }
.green { color: #4e9a3a; }
.folio { margin-top: auto; text-align: center; font: 14px/16px "Open Sans", sans-serif; color: #888; }
.ibeam { position: absolute; left: 669px; top: 276px; width: 7px; height: 15px; }

.status { display: flex; align-items: center; height: 21px; padding: 0 13px 0 20px; background: #f3f3f3; font-size: 10px; white-space: nowrap; gap: 18px; }
.viewbar { display: flex; align-items: center; gap: 11px; margin-right: auto; }
.focus { gap: 2px; }
.views { display: flex; margin-left: -6px; }
.views button { width: 37px; height: 20px; }
.views .on { background: #d9d9d9; }
.zoom { display: flex; align-items: center; gap: 5px; font-size: 13px; }
.zoom input { appearance: none; width: 94px; height: 12px; margin: 0; background: linear-gradient(#777, #777) center / 100% 1px no-repeat; }
.zoom input::-webkit-slider-thumb { appearance: none; width: 4px; height: 10px; background: #555; }

/* taskbar */
.taskbar { display: flex; height: 37px; background: #21363e; color: #fff; }
.start { width: 45px; background: #1b2a3b; }
.search { display: flex; align-items: center; gap: 12px; width: 322px; padding: 0 10px 0 8px; background: #f2f2f2; color: #333; }
.search input { flex: 1; min-width: 0; border: 0; padding: 0; background: none; outline: 0; font-size: 14px; }
.search input::placeholder { color: #555; opacity: 1; }
.sparkle { width: 56px; height: 26px; }
.apps { display: flex; }
.apps button { width: 46px; }
.apps .on { background: #4a5e68; border-bottom: 2px solid #76b9ed; }
.tray { display: flex; align-items: center; margin-right: auto; margin-left: 4px; padding-left: 8px; border-left: 1px solid #4c5d64; }
.tray button { width: 22px; }
.lang { width: 35px; text-align: center; font-size: 12px; }
.clock { display: grid; width: 66px; text-align: center; line-height: 16px; }
.tray .notify { width: 36px; }
```
